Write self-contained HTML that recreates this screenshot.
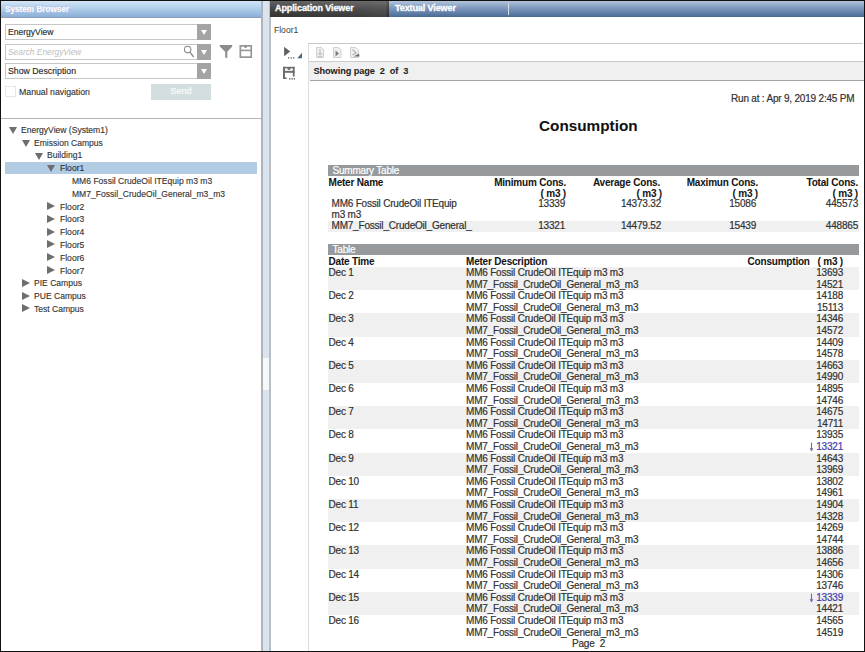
<!DOCTYPE html>
<html><head><meta charset="utf-8">
<style>
*{margin:0;padding:0;box-sizing:border-box}
html,body{width:865px;height:652px;overflow:hidden;background:#fff}
body{position:relative;font-family:"Liberation Sans",sans-serif;color:#222}
.a{position:absolute}
.nw{white-space:nowrap}
/* left panel */
#sbhdr{left:1px;top:1px;width:260px;height:17px;background:linear-gradient(#d3e5f6,#b2cfeb 45%,#8bafd9);border-bottom:1.5px solid #8d9db2}
#sbhdr span{position:absolute;left:4px;top:2.7px;font:bold 8.2px "Liberation Sans",sans-serif;color:#fff;line-height:12px;-webkit-text-stroke:0.25px #f4f8ff;text-shadow:0 0 1.5px #a9c}
.combo{position:absolute;left:5px;width:206px;height:16px;border:1px solid #c6c6c6;background:#fff}
.combo .btn{position:absolute;right:-1px;top:-1px;width:14.5px;height:16px;background:#a4a4a4}
.combo .btn:after{content:"";position:absolute;left:4px;top:6.2px;border-left:3.8px solid transparent;border-right:3.8px solid transparent;border-top:5.9px solid #fff}
.combo .t{position:absolute;left:2px;top:1px;font-size:9.5px;transform:scaleX(0.9);transform-origin:0 50%;line-height:12px;color:#1a1a1a;-webkit-text-stroke:0.15px #444}
.tr{position:absolute;margin-top:0.6px;height:12.8px;line-height:12.8px;font-size:9.5px;transform:scaleX(0.9);transform-origin:0 50%;color:#2a2a2a;-webkit-text-stroke:0.15px #555;white-space:nowrap}
.tri-d{position:absolute;width:0;height:0;border-left:4px solid transparent;border-right:4px solid transparent;border-top:7px solid #6e6e6e}
.tri-r{position:absolute;width:0;height:0;border-top:4.5px solid transparent;border-bottom:4.5px solid transparent;border-left:8px solid #6e6e6e}
/* right */
#tabs{left:270px;top:1px;width:594px;height:16px;background:linear-gradient(#b2c4db,#7c98bc 45%,#4a6a96)}
#tab1{left:270px;top:1px;width:119px;height:16px;background:linear-gradient(90deg,#3a3a3a,#444 75%,#4a4a4a 97%,#2e2e2e);}
#tab1:before{content:"";position:absolute;left:0;top:0;right:0;bottom:0;background:linear-gradient(rgba(255,255,255,.2),rgba(255,255,255,.05) 50%,rgba(0,0,0,.12))}
.tabt{position:absolute;top:2px;font:bold 9px "Liberation Sans",sans-serif;color:#fff;line-height:12px;white-space:nowrap;letter-spacing:-0.1px;-webkit-text-stroke:0.3px #fff}
.rep{font-size:10px;letter-spacing:-0.2px;color:#2a2a2a;-webkit-text-stroke:0.2px #444;white-space:nowrap;position:absolute;line-height:11.6px}
.b{font-weight:bold;color:#151515;-webkit-text-stroke:0.05px #222}
.bar{position:absolute;left:328px;width:531px;height:11px;background:#969a9c}
.bar span{position:absolute;left:4.5px;top:0;font-size:10px;letter-spacing:-0.2px;line-height:11px;color:#fff;-webkit-text-stroke:0.2px #fff}
.shade{position:absolute;left:328px;width:531px;background:#f0f0f0}
.r{text-align:right}
.blue{color:#3a3ae0}
.arr{vertical-align:-2px;margin-right:2.5px}
</style></head><body>

<!-- LEFT PANEL -->
<div id="sbhdr" class="a"><span>System Browser</span></div>

<div class="combo" style="top:24px"><div class="t">EnergyView</div><div class="btn"></div></div>
<div class="combo" style="top:44px"><div class="t" style="font-style:italic;color:#bdbdbd;font-size:9.3px;-webkit-text-stroke:0">Search EnergyView</div>
  <svg class="a" style="left:178px;top:0px" width="13" height="14" viewBox="0 0 13 14"><circle cx="3.6" cy="4.6" r="3.3" fill="none" stroke="#8a8a8a" stroke-width="1.1"/><path d="M6 7.2 L9.6 12" stroke="#8a8a8a" stroke-width="1.3"/></svg>
  <div class="btn"></div></div>
<div class="combo" style="top:63px"><div class="t" style="transform:scaleX(0.92)">Show Description</div><div class="btn"></div></div>

<svg class="a" style="left:219px;top:44px" width="14" height="15" viewBox="0 0 14 15"><path d="M0.8 1 H13.2 V2.4 L8.3 7.7 V13.7 H6.2 V7.7 L0.8 2.4 Z" fill="#8c8c8c"/></svg>
<svg class="a" style="left:239px;top:44px" width="14" height="15" viewBox="0 0 14 15"><rect x="1.35" y="1.85" width="10.9" height="11.3" fill="none" stroke="#969696" stroke-width="1.7"/><rect x="1" y="5.6" width="11.8" height="1.6" fill="#969696"/><rect x="5.5" y="1.7" width="2.1" height="2.2" fill="#888"/></svg>

<div class="a" style="left:5px;top:86px;width:10.5px;height:11px;border:1px solid #e6e6e6"></div>
<div class="a nw" style="left:18.5px;top:85.5px;font-size:9.5px;transform:scaleX(0.92);transform-origin:0 50%;line-height:12px;color:#2a2a2a;-webkit-text-stroke:0.15px #555">Manual navigation</div>
<div class="a" style="left:151px;top:84px;width:60px;height:16px;background:#d2dee0"><div style="text-align:center;font-size:9px;line-height:15.5px;color:#f8fbfb;-webkit-text-stroke:0.2px #fff">Send</div></div>

<div class="a" style="left:1px;top:118px;width:260px;height:1px;background:#b4b4b4"></div>

<!-- tree -->
<div class="a" style="left:5px;top:161.5px;width:252px;height:12px;background:#b2cce4"></div>
<div class="tri-d" style="left:9px;top:127px"></div><div class="tr" style="left:21px;top:123.3px">EnergyView (System1)</div>
<div class="tri-d" style="left:21.5px;top:139.8px"></div><div class="tr" style="left:34px;top:136.1px">Emission Campus</div>
<div class="tri-d" style="left:34.5px;top:152.6px"></div><div class="tr" style="left:46.5px;top:148.9px">Building1</div>
<div class="tri-d" style="left:47px;top:165.4px"></div><div class="tr" style="left:59.5px;top:161.7px;color:#223">Floor1</div>
<div class="tr" style="left:71.5px;top:174.5px">MM6 Fossil CrudeOil ITEquip m3 m3</div>
<div class="tr" style="left:71.5px;top:187.3px">MM7_Fossil_CrudeOil_General_m3_m3</div>
<div class="tri-r" style="left:47px;top:202px"></div><div class="tr" style="left:59.5px;top:200.1px">Floor2</div>
<div class="tri-r" style="left:47px;top:214.8px"></div><div class="tr" style="left:59.5px;top:212.9px">Floor3</div>
<div class="tri-r" style="left:47px;top:227.6px"></div><div class="tr" style="left:59.5px;top:225.7px">Floor4</div>
<div class="tri-r" style="left:47px;top:240.4px"></div><div class="tr" style="left:59.5px;top:238.5px">Floor5</div>
<div class="tri-r" style="left:47px;top:253.2px"></div><div class="tr" style="left:59.5px;top:251.3px">Floor6</div>
<div class="tri-r" style="left:47px;top:266px"></div><div class="tr" style="left:59.5px;top:264.1px">Floor7</div>
<div class="tri-r" style="left:21.5px;top:278.8px"></div><div class="tr" style="left:34px;top:276.9px">PIE Campus</div>
<div class="tri-r" style="left:21.5px;top:291.6px"></div><div class="tr" style="left:34px;top:289.7px">PUE Campus</div>
<div class="tri-r" style="left:21.5px;top:304.4px"></div><div class="tr" style="left:34px;top:302.5px">Test Campus</div>

<!-- splitter -->
<div class="a" style="left:261px;top:1px;width:1.5px;height:651px;background:#aeb4b9"></div>
<div class="a" style="left:262.5px;top:1px;width:6.5px;height:651px;background:#d9e4ee"></div>
<div class="a" style="left:263px;top:358px;width:6px;height:32px;background:#f6f8fa"></div>
<div class="a" style="left:269px;top:1px;width:1.5px;height:651px;background:#b9bfc4"></div>

<!-- RIGHT PANEL -->
<div id="tabs" class="a"></div>
<div id="tab1" class="a"></div>
<div class="tabt" style="left:275px">Application Viewer</div>
<div class="tabt" style="left:395px">Textual Viewer</div>
<div class="a" style="left:508px;top:3px;width:1px;height:12px;background:#d4dfeb"></div>

<div class="a nw" style="left:274px;top:23.6px;font-size:9.5px;transform:scaleX(0.9);transform-origin:0 50%;line-height:11px;color:#3a3a3a">Floor1</div>

<!-- left toolbar icons -->
<svg class="a" style="left:283px;top:46px" width="20" height="14" viewBox="0 0 20 14"><path d="M1.1 0.7 L7.2 5.45 L1.1 10.2 Z" fill="#616161"/><g fill="#707070"><rect x="5" y="11.2" width="1.3" height="1.4"/><rect x="7.5" y="11.2" width="1.3" height="1.4"/><rect x="10" y="11.2" width="1.3" height="1.4"/></g><path d="M14.2 12.2 L19 6.8 V12.2 Z" fill="#4d6584"/></svg>
<svg class="a" style="left:282px;top:66px" width="16" height="15" viewBox="0 0 16 15"><g fill="#6e6e6e"><rect x="1" y="0.8" width="2" height="12.2"/><rect x="1" y="0.8" width="11.6" height="1.6"/><rect x="10.8" y="0.8" width="1.8" height="9.7"/><rect x="1" y="4.8" width="11.6" height="2"/><rect x="1" y="11.4" width="3.7" height="1.6"/><circle cx="7" cy="2.6" r="1.5"/><rect x="7.1" y="12" width="1.3" height="1.6"/><rect x="9.4" y="12" width="1.3" height="1.6"/><rect x="11.7" y="12" width="1.3" height="1.6"/></g></svg>

<!-- report frame -->
<div class="a" style="left:308px;top:43px;width:555px;height:609px;border-left:1px solid #dcdcdc;border-top:1px solid #c8c8c8"></div>
<div class="a" style="left:309px;top:60.6px;width:555px;height:1px;background:#cbcbcb"></div>
<div class="a" style="left:309px;top:61.6px;width:555px;height:18px;background:#f0f0f0"></div>
<div class="a" style="left:310px;top:79.6px;width:554px;height:1.4px;background:#a4a4a4"></div>
<!-- toolbar icons -->
<svg class="a" style="left:315px;top:47px" width="48" height="12" viewBox="0 0 48 12"><g fill="#f1f1f1" stroke="#cfcfcf" stroke-width="1"><path d="M1.5 0.5 H6.5 L8.5 2.5 V10.5 H1.5 Z"/><path d="M18.5 0.5 H23.5 L26 3 V10.5 H18.5 Z"/><path d="M35.5 0.5 H40.5 L43.5 3.5 V10.5 H35.5 Z"/></g><path d="M5 2 V8.5 M2.5 7 H7.5 M3 9.5 H7" stroke="#c0c0c0" fill="none" stroke-width="1.2"/><path d="M20.5 3.5 L24 6.5 L20.5 9.5 Z" fill="#7a7a7a"/><path d="M37.5 2.5 L41 6 L37.5 8" stroke="#b0b0b0" fill="none" stroke-width="1.1"/><path d="M38.5 9.5 L44 6.5 L44.5 9.5 Z" fill="#707070"/></svg>
<div class="a nw b" style="left:313.5px;top:65px;font-size:9.2px;letter-spacing:-0.08px;line-height:12px;color:#222">Showing page&nbsp; 2&nbsp; of&nbsp; 3</div>

<!-- report content -->
<div class="rep" style="left:731px;top:93px">Run at : Apr 9, 2019 2:45 PM</div>
<div class="rep b" style="left:539px;top:117.3px;font-size:15.3px;letter-spacing:0;line-height:18px;color:#111">Consumption</div>

<!-- summary table -->
<div class="bar" style="top:164.6px"><span>Summary Table</span></div>
<div class="rep b" style="left:328.5px;top:176.6px">Meter Name</div>
<div class="rep b r" style="left:466px;top:176.6px;width:100px;line-height:11.2px">Minimum Cons.<br>( m3 )</div>
<div class="rep b r" style="left:560px;top:176.6px;width:100px;line-height:11.2px">Average Cons.</div><div class="rep b r" style="left:562px;top:187.8px;width:100px;line-height:11.2px">( m3 )</div>
<div class="rep b r" style="left:658px;top:176.6px;width:100px;line-height:11.2px">Maximun Cons.<br>( m3 )</div>
<div class="rep b r" style="left:758px;top:176.6px;width:100px;line-height:11.2px">Total Cons.<br>( m3 )</div>
<div class="rep" style="left:331.5px;top:198.2px;line-height:11.2px">MM6 Fossil CrudeOil ITEquip<br>m3 m3</div>
<div class="rep r" style="left:465px;top:198px;width:100px">13339</div>
<div class="rep r" style="left:561px;top:198px;width:100px">14373.32</div>
<div class="rep r" style="left:656px;top:198px;width:100px">15086</div>
<div class="rep r" style="left:758px;top:198px;width:100px">445573</div>
<div class="shade" style="top:220.5px;height:11.5px"></div>
<div class="rep" style="left:331.5px;top:220px">MM7_Fossil_CrudeOil_General_</div>
<div class="rep r" style="left:465px;top:220px;width:100px">13321</div>
<div class="rep r" style="left:561px;top:220px;width:100px">14479.52</div>
<div class="rep r" style="left:656px;top:220px;width:100px">15439</div>
<div class="rep r" style="left:758px;top:220px;width:100px">448865</div>

<!-- table -->
<div class="bar" style="top:243.6px"><span>Table</span></div>
<div class="rep b" style="left:328.5px;top:256px">Date Time</div>
<div class="rep b" style="left:466px;top:256px">Meter Description</div>
<div class="rep b r" style="left:643px;top:256px;width:200px">Consumption&nbsp;&nbsp; ( m3 )</div>

<!--ROWS-->
<div class="shade" style="top:267.0px;height:23.2px"></div>
<div class="shade" style="top:313.4px;height:23.2px"></div>
<div class="shade" style="top:359.8px;height:23.2px"></div>
<div class="shade" style="top:406.2px;height:23.2px"></div>
<div class="shade" style="top:452.6px;height:23.2px"></div>
<div class="shade" style="top:499.0px;height:23.2px"></div>
<div class="shade" style="top:545.4px;height:23.2px"></div>
<div class="shade" style="top:591.8px;height:23.2px"></div>
<div class="rep" style="left:328.5px;top:267.0px">Dec 1</div>
<div class="rep" style="left:466px;top:267.0px">MM6 Fossil CrudeOil ITEquip m3 m3<br>MM7_Fossil_CrudeOil_General_m3_m3</div>
<div class="rep r" style="left:743px;top:267.0px;width:100px">13693</div>
<div class="rep r" style="left:743px;top:278.6px;width:100px">14521</div>
<div class="rep" style="left:328.5px;top:290.2px">Dec 2</div>
<div class="rep" style="left:466px;top:290.2px">MM6 Fossil CrudeOil ITEquip m3 m3<br>MM7_Fossil_CrudeOil_General_m3_m3</div>
<div class="rep r" style="left:743px;top:290.2px;width:100px">14188</div>
<div class="rep r" style="left:743px;top:301.8px;width:100px">15113</div>
<div class="rep" style="left:328.5px;top:313.4px">Dec 3</div>
<div class="rep" style="left:466px;top:313.4px">MM6 Fossil CrudeOil ITEquip m3 m3<br>MM7_Fossil_CrudeOil_General_m3_m3</div>
<div class="rep r" style="left:743px;top:313.4px;width:100px">14346</div>
<div class="rep r" style="left:743px;top:325.0px;width:100px">14572</div>
<div class="rep" style="left:328.5px;top:336.6px">Dec 4</div>
<div class="rep" style="left:466px;top:336.6px">MM6 Fossil CrudeOil ITEquip m3 m3<br>MM7_Fossil_CrudeOil_General_m3_m3</div>
<div class="rep r" style="left:743px;top:336.6px;width:100px">14409</div>
<div class="rep r" style="left:743px;top:348.2px;width:100px">14578</div>
<div class="rep" style="left:328.5px;top:359.8px">Dec 5</div>
<div class="rep" style="left:466px;top:359.8px">MM6 Fossil CrudeOil ITEquip m3 m3<br>MM7_Fossil_CrudeOil_General_m3_m3</div>
<div class="rep r" style="left:743px;top:359.8px;width:100px">14663</div>
<div class="rep r" style="left:743px;top:371.4px;width:100px">14990</div>
<div class="rep" style="left:328.5px;top:383.0px">Dec 6</div>
<div class="rep" style="left:466px;top:383.0px">MM6 Fossil CrudeOil ITEquip m3 m3<br>MM7_Fossil_CrudeOil_General_m3_m3</div>
<div class="rep r" style="left:743px;top:383.0px;width:100px">14895</div>
<div class="rep r" style="left:743px;top:394.6px;width:100px">14746</div>
<div class="rep" style="left:328.5px;top:406.2px">Dec 7</div>
<div class="rep" style="left:466px;top:406.2px">MM6 Fossil CrudeOil ITEquip m3 m3<br>MM7_Fossil_CrudeOil_General_m3_m3</div>
<div class="rep r" style="left:743px;top:406.2px;width:100px">14675</div>
<div class="rep r" style="left:743px;top:417.8px;width:100px">14711</div>
<div class="rep" style="left:328.5px;top:429.4px">Dec 8</div>
<div class="rep" style="left:466px;top:429.4px">MM6 Fossil CrudeOil ITEquip m3 m3<br>MM7_Fossil_CrudeOil_General_m3_m3</div>
<div class="rep r" style="left:743px;top:429.4px;width:100px">13935</div>
<div class="rep r blue" style="left:743px;top:441.0px;width:100px"><svg class="arr" width="5" height="10" viewBox="0 0 5 10"><path d="M2.5 0.5 V8.5" stroke="#6c6cb0" stroke-width="1.1"/><path d="M0.6 6.2 L2.5 9.6 L4.4 6.2 Z" fill="#6c6cb0"/></svg>13321</div>
<div class="rep" style="left:328.5px;top:452.6px">Dec 9</div>
<div class="rep" style="left:466px;top:452.6px">MM6 Fossil CrudeOil ITEquip m3 m3<br>MM7_Fossil_CrudeOil_General_m3_m3</div>
<div class="rep r" style="left:743px;top:452.6px;width:100px">14643</div>
<div class="rep r" style="left:743px;top:464.2px;width:100px">13969</div>
<div class="rep" style="left:328.5px;top:475.8px">Dec 10</div>
<div class="rep" style="left:466px;top:475.8px">MM6 Fossil CrudeOil ITEquip m3 m3<br>MM7_Fossil_CrudeOil_General_m3_m3</div>
<div class="rep r" style="left:743px;top:475.8px;width:100px">13802</div>
<div class="rep r" style="left:743px;top:487.4px;width:100px">14961</div>
<div class="rep" style="left:328.5px;top:499.0px">Dec 11</div>
<div class="rep" style="left:466px;top:499.0px">MM6 Fossil CrudeOil ITEquip m3 m3<br>MM7_Fossil_CrudeOil_General_m3_m3</div>
<div class="rep r" style="left:743px;top:499.0px;width:100px">14904</div>
<div class="rep r" style="left:743px;top:510.6px;width:100px">14328</div>
<div class="rep" style="left:328.5px;top:522.2px">Dec 12</div>
<div class="rep" style="left:466px;top:522.2px">MM6 Fossil CrudeOil ITEquip m3 m3<br>MM7_Fossil_CrudeOil_General_m3_m3</div>
<div class="rep r" style="left:743px;top:522.2px;width:100px">14269</div>
<div class="rep r" style="left:743px;top:533.8px;width:100px">14744</div>
<div class="rep" style="left:328.5px;top:545.4px">Dec 13</div>
<div class="rep" style="left:466px;top:545.4px">MM6 Fossil CrudeOil ITEquip m3 m3<br>MM7_Fossil_CrudeOil_General_m3_m3</div>
<div class="rep r" style="left:743px;top:545.4px;width:100px">13886</div>
<div class="rep r" style="left:743px;top:557.0px;width:100px">14656</div>
<div class="rep" style="left:328.5px;top:568.6px">Dec 14</div>
<div class="rep" style="left:466px;top:568.6px">MM6 Fossil CrudeOil ITEquip m3 m3<br>MM7_Fossil_CrudeOil_General_m3_m3</div>
<div class="rep r" style="left:743px;top:568.6px;width:100px">14306</div>
<div class="rep r" style="left:743px;top:580.2px;width:100px">13746</div>
<div class="rep" style="left:328.5px;top:591.8px">Dec 15</div>
<div class="rep" style="left:466px;top:591.8px">MM6 Fossil CrudeOil ITEquip m3 m3<br>MM7_Fossil_CrudeOil_General_m3_m3</div>
<div class="rep r blue" style="left:743px;top:591.8px;width:100px"><svg class="arr" width="5" height="10" viewBox="0 0 5 10"><path d="M2.5 0.5 V8.5" stroke="#6c6cb0" stroke-width="1.1"/><path d="M0.6 6.2 L2.5 9.6 L4.4 6.2 Z" fill="#6c6cb0"/></svg>13339</div>
<div class="rep r" style="left:743px;top:603.4px;width:100px">14421</div>
<div class="rep" style="left:328.5px;top:615.0px">Dec 16</div>
<div class="rep" style="left:466px;top:615.0px">MM6 Fossil CrudeOil ITEquip m3 m3<br>MM7_Fossil_CrudeOil_General_m3_m3</div>
<div class="rep r" style="left:743px;top:615.0px;width:100px">14565</div>
<div class="rep r" style="left:743px;top:626.6px;width:100px">14519</div>
<!--/ROWS-->

<div class="rep" style="left:572px;top:638.3px">Page&nbsp; 2</div>

<!-- outer black border -->
<div class="a" style="left:0;top:0;width:865px;height:1px;background:#111"></div>
<div class="a" style="left:0;top:0;width:1px;height:652px;background:#111"></div>
<div class="a" style="left:864px;top:0;width:1px;height:652px;background:#111"></div>
<div class="a" style="left:0;top:651px;width:865px;height:1px;background:#111"></div>
</body></html>
